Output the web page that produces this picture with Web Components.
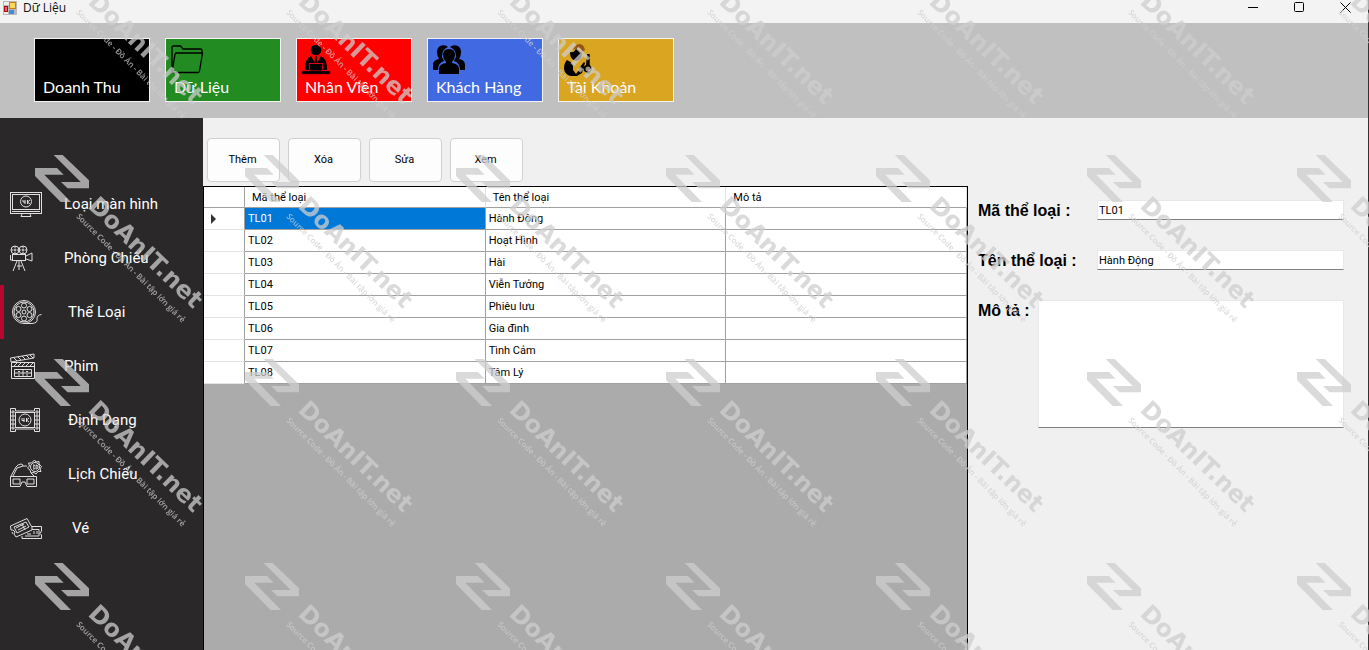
<!DOCTYPE html>
<html lang="vi">
<head>
<meta charset="utf-8">
<title>Dữ Liệu</title>
<style>
  html,
  body {
    height: 100%;
    margin: 0;
    overflow: hidden;
    background: #f0f0f0;
  }
</style>
</head>
<body>
<app-window>
  <title-bar slot="title">Dữ Liệu</title-bar>
  <nav-tile slot="tabs" color="#000000">Doanh Thu</nav-tile>
  <nav-tile slot="tabs" color="#228b22" icon="folder">Dữ Liệu</nav-tile>
  <nav-tile slot="tabs" color="#ff0000" icon="staff">Nhân Viên</nav-tile>
  <nav-tile slot="tabs" color="#4169e1" icon="people">Khách Hàng</nav-tile>
  <nav-tile slot="tabs" color="#daa520" icon="account">Tài Khoản</nav-tile>

  <side-item slot="menu" icon="screen">Loại màn hình</side-item>
  <side-item slot="menu" icon="camera">Phòng Chiếu</side-item>
  <side-item slot="menu" icon="reel" level="1" active>Thể Loại</side-item>
  <side-item slot="menu" icon="clapper">Phim</side-item>
  <side-item slot="menu" icon="film" level="1">Định Dạng</side-item>
  <side-item slot="menu" icon="glasses" level="1">Lịch Chiếu</side-item>
  <side-item slot="menu" icon="tickets" level="2">Vé</side-item>

  <tool-button slot="tools">Thêm</tool-button>
  <tool-button slot="tools">Xóa</tool-button>
  <tool-button slot="tools">Sửa</tool-button>
  <tool-button slot="tools">Xem</tool-button>

  <genre-grid slot="grid"></genre-grid>

  <form-field slot="form" label="Mã thể loại :" value="TL01"></form-field>
  <form-field slot="form" label="Tên thể loại :" value="Hành Động"></form-field>
  <form-field slot="form" label="Mô tả :" multiline></form-field>
</app-window>
<water-mark></water-mark>

<script>
const ICONS = {
  folder: `<g fill="none" stroke="#000" stroke-width="1.3" stroke-linejoin="round">
    <path d="M1 27V2.500Q1 1 2.500 1H9.500L12 4H29.500Q31 4 31 5.500V8"/>
    <path d="M1 27L4 9.500Q4.200 8 5.500 8H31.500L28.500 26Q28.300 27.500 27 27.500H2Q1 27.500 1 27Z"/></g>`,
  staff: `<circle cx="14" cy="5" r="5.300"/>
    <path d="M3 25Q3 13 9 11L14 20L19 11Q25 13 25 25Z"/>
    <path d="M11 11.500L14 19.500L17 11.500Z" fill="#f00"/>
    <path d="M13 11H15L14.700 13L15.500 16.500L14 19.500L12.500 16.500L13.300 13Z"/>
    <path d="M7 18.500H21L20 26H8Z" stroke="#e00020" stroke-width="1"/>
    <path d="M0 26H28V29H0Z" stroke="#700000" stroke-width=".5"/>`,
  people: `<path d="M7 1Q12-1 15 2Q9 4 9 12L11 16Q5 18 5 25H0V20Q0 15 6 14Q4 11 4 7Q4 3 7 1Z"/>
    <path d="M25 1Q20-1 17 2Q23 4 23 12L21 16Q27 18 27 25H32V20Q32 15 26 14Q28 11 28 7Q28 3 25 1Z"/>
    <path d="M16 4Q22 4 22 10Q22 14 19 17V18Q26 19 26 24V29H6V24Q6 19 13 18V17Q10 14 10 10Q10 4 16 4Z"/>`,
  account: `<path d="M9 5Q9 0 15-1Q20-1 21 5L18 7Q17 2 12 3Z" fill="#9a5410"/>
    <path d="M6 7Q11 8 12 3L18 8Q18 15 12 16Q6 15 6 7Z"/>
    <path d="M3 15L8 18L10 22H16L20 17L21 18L18 28L13 31H7Q1 30 0 24Q0 18 3 15Z"/>
    <path d="M9 21H16L15 25L12 29L9 25Z" fill="#daa520"/>
    <path d="M23 9H26V20L28 24L25 29L20 26L19 22L22 20Z"/>
    <path d="M25.500 9V20" stroke="#7b3208" stroke-width=".7"/><circle cx="24" cy="24" r="2.500" fill="#9b9280"/>`,
  screen: `<rect x=".5" y="4.500" width="31" height="21"/><rect x="2.500" y="6.500" width="27" height="15"/>
    <path d="M2 23.500H30M12 26L11 28.500H21L20 26"/><circle cx="16" cy="13.500" r="5.500"/>
    <path d="M13 12V14H15.500M15 12V16M17.500 12V16M20 12L17.500 14L20 16"/>`,
  camera: `<circle cx="5" cy="8" r="4"/><circle cx="13" cy="8" r="4"/><circle cx="5" cy="8" r="1"/><circle cx="13" cy="8" r="1"/>
    <path d="M5 4V6M5 10V12M1 8H3M7 8H11M13 4V6M13 10V12M15 8H17"/>
    <rect x="2.500" y="12.500" width="13" height="6"/><path d="M16 14L22 11V19L16 17M.5 13V18H2M9 19V28M7 19L3 29M11 19L15 29M7 24H12"/>`,
  reel: `<circle cx="14" cy="16" r="11.500"/><circle cx="14" cy="16" r="10"/><circle cx="14" cy="16" r="2"/>
    <circle cx="14" cy="9.500" r="2.500"/><circle cx="14" cy="22.500" r="2.500"/><circle cx="8.500" cy="13" r="2.500"/>
    <circle cx="19.500" cy="13" r="2.500"/><circle cx="8.500" cy="19" r="2.500"/><circle cx="19.500" cy="19" r="2.500"/>
    <path d="M14 27.500H22Q28 27 27 23Q27 19 31.500 18.500"/>`,
  clapper: `<path d="M.5 8L24 4V8L1 12ZM4 8L7 11M8 7L11 10M12 6L15 9M16 5L19 8M20 5L23 8"/>
    <path d="M1.500 12.500H24.500V28.500H1.500ZM1.500 16.500H24.500M4 16L7 13M8 16L11 13M12 16L15 13M16 16L19 13M20 16L23 13"/>
    <path d="M4.500 19.500H21.500V26.500H4.500ZM5 23H21M8 21.500H10M13 20V26M16 21.500H18M8 25H10M16 25H18"/>`,
  film: `<path d="M.5 4.500H5.500V7H24.500V4.500H29.500V27.500H24.500V25H5.500V27.500H.5Z"/>
    <rect x="5.500" y="8.500" width="19" height="15"/><circle cx="15" cy="16" r="6"/>
    <path d="M12 14V16.500H14.500M14 14V18M16.500 14V18M19 14L16.500 16L19 18"/>
    <path d="M2 7H4V9H2ZM2 11H4V13H2ZM2 15H4V17H2ZM2 19H4V21H2ZM2 23H4V25H2ZM26 7H28V9H26ZM26 11H28V13H26ZM26 15H28V17H26ZM26 19H28V21H26ZM26 23H28V25H26Z"/>`,
  glasses: `<path d="M.5 18.500H26.500V28.500H17L15 24H12L10 28.500H.5ZM3 21H10V26H3ZM17 21H24V26H17Z"/>
    <path d="M1 18L6 9Q8 6 11 6Q13 6 13 8L7 10L3 18M13 8H17M21 15L24 18"/>
    <path d="M24.500 2L26 4L29 3.500V6L31.500 8.500L30 11L31 13.500H28L26 16L24 14.500L21 15L20 12L17.500 10L19.500 8L18.500 5H21.500Z"/>
    <circle cx="25" cy="9" r="4.500"/><path d="M23 7H24.500L23.500 9L24.500 11H23M26 7V11Q28 11 28 9Q28 7 26 7"/>`,
  tickets: `<path d="M.5 14L17 6.500L18.500 9L20 12L22 15L22 18L6 25L4 22L5 20L3 18L1 18Z"/>
    <path d="M4 15L16 10L19 15L7 21ZM6 16L14 12M8 18L16 14M12 12L15 18"/>
    <path d="M12 24V26.500H31.500V23L30 21.500L31.500 19V14.500H22M22 17.500H29V24H15M24 19V22M27 19V22M17 22H21"/>
    <path d="M3 22L2 20"/>`
};

/** Shared base: puts styles and markup into an open shadow root. */
class BaseElement extends HTMLElement {
  constructor () {
    super();
    this.attachShadow({ mode: 'open' });
  }

  connectedCallback () {
    this.shadowRoot.innerHTML = `
      <style>
        *, *::before { box-sizing: border-box; }
        ${this.getStyles()}
      </style>
      ${this.getTemplate()}`;
  }
}

/** Main frame: title bar, tab strip, side menu and work area. */
class AppWindow extends BaseElement {
  getStyles () {
    return `
      :host {
        display: flex;
        flex-direction: column;
        height: 100vh;
        box-sizing: border-box;
        border-right: 1px solid #333;
        background: #f0f0f0;
        font-family: Roboto, "Liberation Sans", sans-serif;
      }
      header {
        display: flex;
        gap: 15px;
        padding: 15px 34px 16px;
        background: #c0c0c0;
      }
      .body {
        flex: 1;
        min-height: 0;
        display: flex;
      }
      nav {
        flex: none;
        width: 203px;
        padding-top: 59px;
        background: #2a2829;
      }
      main {
        flex: 1;
        min-width: 0;
        display: flex;
        flex-direction: column;
      }
      .tools {
        display: flex;
        gap: 8px;
        padding: 20px 4px 4px;
      }
      .work {
        flex: 1;
        min-height: 0;
        display: flex;
      }
      form {
        flex: none;
        display: flex;
        flex-direction: column;
        gap: 29px;
        width: 400px;
        padding: 14px 24px 0 10px;
      }
    `;
  }

  getTemplate () {
    return `
      <slot name="title"></slot>
      <header><slot name="tabs"></slot></header>
      <div class="body">
        <nav><slot name="menu"></slot></nav>
        <main>
          <div class="tools"><slot name="tools"></slot></div>
          <div class="work">
            <slot name="grid"></slot>
            <form><slot name="form"></slot></form>
          </div>
        </main>
      </div>`;
  }
}

/** Window caption with its three buttons. */
class TitleBar extends BaseElement {
  getStyles () {
    return `
      :host {
        display: flex;
        align-items: center;
        height: 23px;
        box-sizing: border-box;
        padding: 0 0 8px 3px;
        background: #f3f3f3;
        font: 12px/15px "Open Sans", "Noto Sans", sans-serif;
        color: #111;
      }
      .title { flex: 1; padding-left: 6px; }
      .logo { width: 14px; height: 14px; }
      button {
        width: 46px;
        height: 15px;
        padding: 0;
        border: 0;
        background: none;
      }
      button svg {
        display: block;
        margin: auto;
        fill: none;
        stroke: #000;
      }
    `;
  }

  getTemplate () {
    return `
      <svg class="logo" viewBox="0 0 14 14" aria-hidden="true">
        <rect width="14" height="14" fill="#b8b8b8"/>
        <rect x="1" y="1" width="5" height="3" fill="#eee"/>
        <rect x="1.500" y="5.500" width="3" height="5" fill="#f06060" stroke="#a01018"/>
        <rect x="6.500" y="1.500" width="6" height="6" fill="#ffd65a" stroke="#c08510"/>
        <rect x="6" y="9" width="5" height="4" fill="#3f8be0"/>
        <rect x="1" y="11" width="4" height="2" fill="#eee"/>
      </svg>
      <span class="title"><slot></slot></span>
      <button type="button" aria-label="Minimize"><svg width="11" height="11"><path d="M0 5.500H10"/></svg></button>
      <button type="button" aria-label="Maximize"><svg width="11" height="11"><rect x=".5" y=".5" width="9" height="9" rx="1"/></svg></button>
      <button type="button" aria-label="Close"><svg width="11" height="11"><path d="M.5 .5L10.500 10.500M10.500 .5L.5 10.500"/></svg></button>`;
  }
}

/** Coloured tile in the top strip. */
class NavTile extends BaseElement {
  getStyles () {
    return `
      :host { display: block; }
      button {
        display: flex;
        flex-direction: column;
        align-items: flex-start;
        width: 116px;
        height: 64px;
        padding: 6px 5px;
        border: 1px solid #f4f4f4;
        background: ${this.getAttribute('color')};
        color: #fff;
        font: 16px/20px Lato, sans-serif;
      }
      svg { width: 32px; height: 32px; overflow: visible; }
      span { padding-left: 3px; white-space: nowrap; }
    `;
  }

  getTemplate () {
    return `
      <button type="button">
        <svg viewBox="0 0 32 32" aria-hidden="true">${ICONS[this.getAttribute('icon')] || ''}</svg>
        <span><slot></slot></span>
      </button>`;
  }
}

/** Entry of the side menu. */
class SideItem extends BaseElement {
  getStyles () {
    return `
      :host { display: block; }
      :host([active]) button { border-left-color: #b8062f; }
      :host([level="1"]) span { padding-left: 26px; }
      :host([level="2"]) span { padding-left: 30px; }
      button {
        display: flex;
        align-items: center;
        width: 100%;
        height: 54px;
        padding: 0 0 0 6px;
        border: 0;
        border-left: 4px solid transparent;
        background: none;
        color: #fff;
        font: 15px/20px Roboto, sans-serif;
      }
      svg {
        width: 32px;
        height: 32px;
        fill: none;
        stroke: #e0e0e0;
        stroke-width: 1;
      }
      span { padding-left: 22px; }
    `;
  }

  getTemplate () {
    return `
      <button type="button">
        <svg viewBox="0 0 32 32" aria-hidden="true">${ICONS[this.getAttribute('icon')]}</svg>
        <span><slot></slot></span>
      </button>`;
  }
}

class ToolButton extends BaseElement {
  getStyles () {
    return `
      :host { display: block; }
      button {
        width: 73px;
        height: 44px;
        padding: 0 2px 0 0;
        border: 1px solid #d0d0d0;
        border-radius: 4px;
        background: #fdfdfd;
        color: #000;
        font: 11px/16px Roboto, sans-serif;
      }
    `;
  }

  getTemplate () {
    return '<button type="button"><slot></slot></button>';
  }
}

/** Table of film genres with a row header column. */
class GenreGrid extends BaseElement {
  rows = [
    ['TL01', 'Hành Động', ''],
    ['TL02', 'Hoạt Hình', ''],
    ['TL03', 'Hài', ''],
    ['TL04', 'Viễn Tưởng', ''],
    ['TL05', 'Phiêu lưu', ''],
    ['TL06', 'Gia đình', ''],
    ['TL07', 'Tình Cảm', ''],
    ['TL08', 'Tâm Lý', '']
  ];

  getStyles () {
    return `
      :host {
        display: block;
        flex: 1;
        min-width: 0;
        box-sizing: border-box;
        border: 1px solid #000;
        border-bottom: 0;
        background: #ababab;
      }
      table {
        width: 100%;
        table-layout: fixed;
        border-collapse: separate;
        border-spacing: 0;
        background: #fff;
        font: 11px/16px Roboto, sans-serif;
        color: #000;
      }
      th, td {
        height: 22px;
        padding: 0 3px;
        border-right: 1px solid #a0a0a0;
        border-bottom: 1px solid #a0a0a0;
        text-align: left;
        font-weight: 400;
      }
      thead th { height: 21px; padding: 2px 7px 0; }
      thead th + th { border-right-color: #e3e3e3; }
      .mark { width: 41px; }
      tbody th { border-bottom-color: #e3e3e3; }
      td.selected { background: #0078d7; color: #fff; }
      svg { display: block; margin-left: 4px; }
    `;
  }

  getTemplate () {
    const body = this.rows.map((row, index) => `
      <tr>
        <th scope="row">${index === 0 ? '<svg width="6" height="10"><path d="M0 0L5 5L0 10Z" fill="#333"/></svg>' : ''}</th>
        ${row.map((text, col) => `<td${index + col === 0 ? ' class="selected"' : ''}>${text}</td>`).join('')}
      </tr>`).join('');

    return `
      <table>
        <thead>
          <tr><th class="mark"></th><th>Mã thể loại</th><th>Tên thể loại</th><th>Mô tả</th></tr>
        </thead>
        <tbody>${body}</tbody>
      </table>`;
  }
}

/** Label with a text box, or a text area when "multiline" is set. */
class FormField extends BaseElement {
  getStyles () {
    return `
      :host {
        display: flex;
        align-items: flex-start;
      }
      label {
        flex: none;
        width: 119px;
        padding-top: 1px;
        font: bold 16px/20px "Liberation Sans", sans-serif;
        color: #000;
      }
      :host([multiline]) label { width: 60px; }
      input, textarea {
        flex: 1;
        min-width: 0;
        height: 20px;
        margin: 0;
        padding: 0 1px;
        border: 1px solid #e8e8e8;
        border-bottom-color: #808080;
        border-radius: 0;
        outline: 0;
        background: #fff;
        color: #000;
        font: 11px/16px Roboto, sans-serif;
        resize: none;
      }
      textarea { height: 128px; }
    `;
  }

  getTemplate () {
    const value = this.getAttribute('value') || '';
    const control = this.hasAttribute('multiline')
      ? `<textarea id="box">${value}</textarea>`
      : `<input id="box" type="text" value="${value}">`;
    return `<label for="box">${this.getAttribute('label')}</label>${control}`;
  }
}

/** Diagonal site mark repeated over the whole window. */
class WaterMark extends BaseElement {
  getStyles () {
    return `
      :host {
        position: fixed;
        inset: 0;
        overflow: hidden;
        pointer-events: none;
      }
      svg { display: block; width: 100%; height: 100%; }
      g { fill: #cecece; }
      .all { opacity: .75; }
      .name { font: bold 24px "DejaVu Sans", sans-serif; }
      .tag { font: 600 8px "Open Sans", sans-serif; }
    `;
  }

  getTemplate () {
    let tiles = '';
    for (let row = -1; row < 3; row++) {
      for (let col = 0; col < 7; col++) {
        tiles += `
          <g transform="translate(${35 + Math.round(col * 210.3)} ${155 + row * 204})">
            <path d="M18.700 0H27.700L54 25.300V33.300H32.500L26 27H45.700Z"/>
            <path d="M0 13H22L28.700 19.700H9.300L36 47H25.700L0 21Z"/>
            <text class="name" transform="translate(52 52) rotate(44)">DoAnIT.net</text>
            <text class="tag" transform="translate(41 62) rotate(45)">Source Code - Đồ Án - Bài tập lớn giá rẻ</text>
          </g>`;
      }
    }
    return `<svg aria-hidden="true"><g class="all">${tiles}</g></svg>`;
  }
}

customElements.define('app-window', AppWindow);
customElements.define('title-bar', TitleBar);
customElements.define('nav-tile', NavTile);
customElements.define('side-item', SideItem);
customElements.define('tool-button', ToolButton);
customElements.define('genre-grid', GenreGrid);
customElements.define('form-field', FormField);
customElements.define('water-mark', WaterMark);
</script>
</body>
</html>
